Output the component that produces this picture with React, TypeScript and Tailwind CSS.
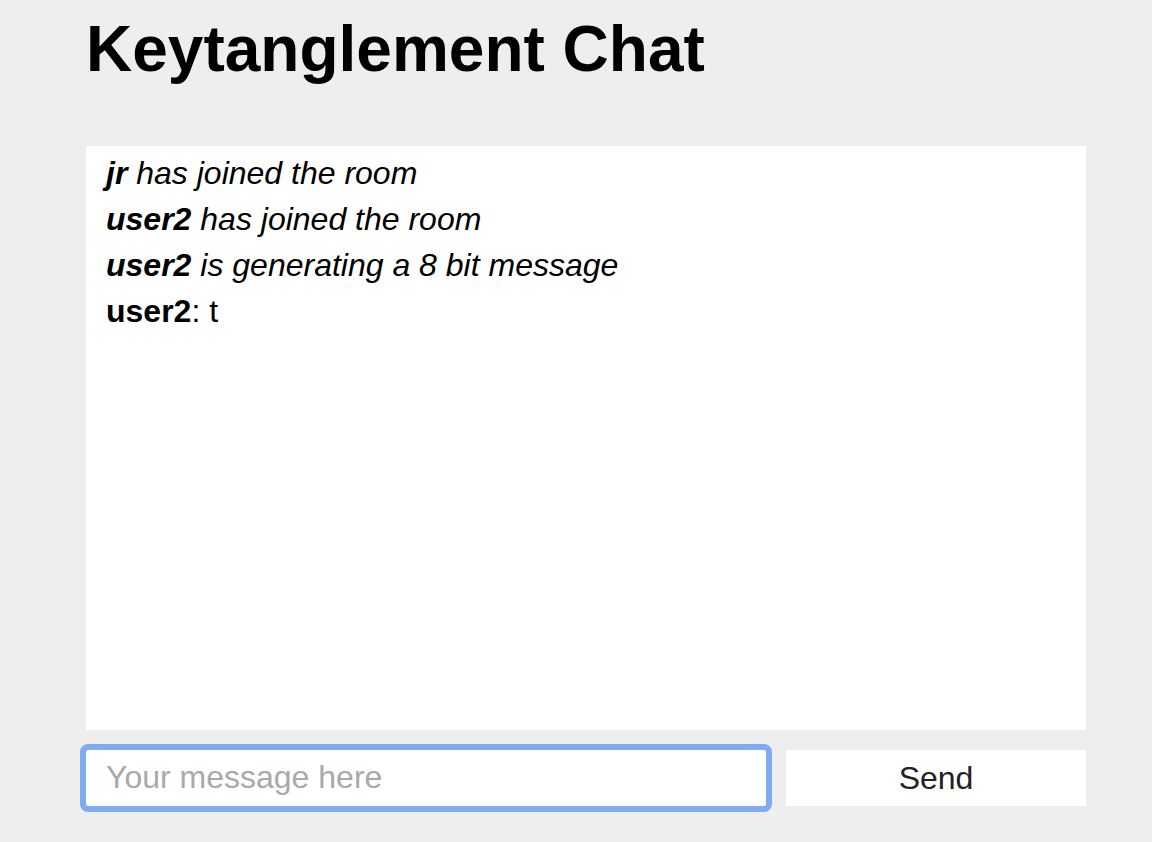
export default function App() {
  const events = [
    { user: "jr", text: "has joined the room" },
    { user: "user2", text: "has joined the room" },
    { user: "user2", text: "is generating a 8 bit message" },
  ];

  const messages = [{ user: "user2", text: "t" }];

  return (
    <div className="min-h-[842px] bg-[#eeeeee] font-['Liberation_Sans',Arial,sans-serif] text-black">
      <div className="ml-[86px] w-[1000px] flex flex-col">
        <h1 className="mt-[13px] text-[64px] font-bold leading-[1.15]">
          Keytanglement Chat
        </h1>

        <ul className="mt-[59px] h-[584px] bg-white pt-[4px] px-[20px] text-[32px] leading-[46px]">
          {events.map((e, i) => (
            <li key={i} className="italic">
              <span className="font-bold">{e.user}</span> {e.text}
            </li>
          ))}
          {messages.map((m, i) => (
            <li key={"m" + i}>
              <span className="font-bold">{m.user}</span>: {m.text}
            </li>
          ))}
        </ul>

        <form
          className="mt-[20px] flex gap-[20px]"
          onSubmit={(e) => e.preventDefault()}
        >
          <input
            type="text"
            placeholder="Your message here"
            className="h-[56px] w-[680px] bg-white px-[20px] text-[32px] text-black outline-[6px] outline-solid outline-[#80abf0] rounded-[2px] placeholder:text-[#a9a9a9]"
          />
          <button
            type="submit"
            className="h-[56px] w-[300px] bg-white text-[32px] text-[#222222]"
          >
            Send
          </button>
        </form>
      </div>
    </div>
  );
}
